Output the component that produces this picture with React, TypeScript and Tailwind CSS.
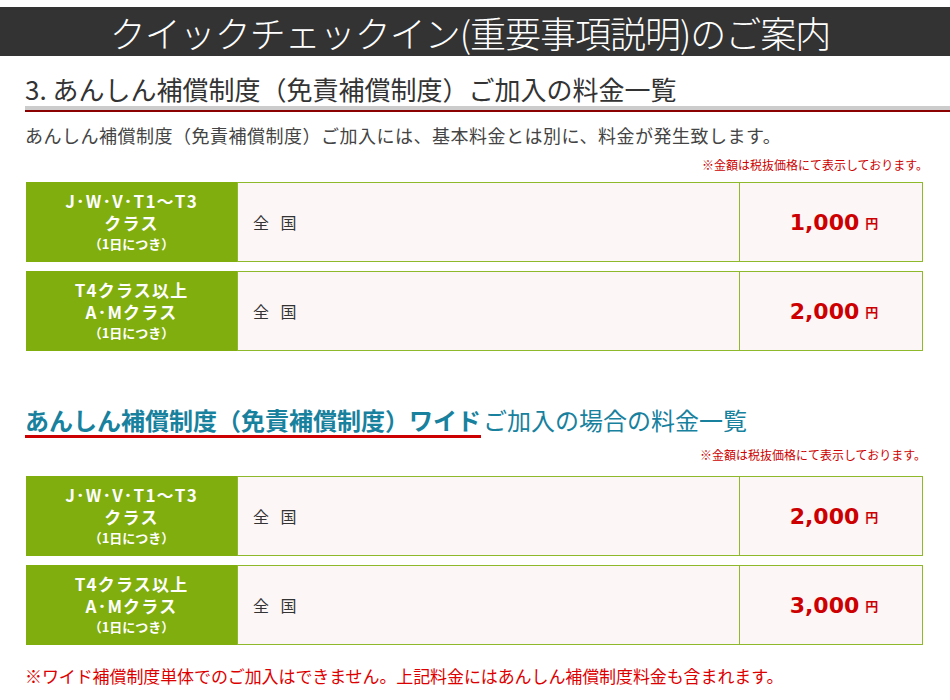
const jp = "font-['Noto_Sans_CJK_JP','Noto_Sans',sans-serif]";

interface Row {
  lines: string[];
  price: string;
}

const basic: Row[] = [
  { lines: ["J･W･V･T1～T3", "クラス"], price: "1,000" },
  { lines: ["T4クラス以上", "A･Mクラス"], price: "2,000" },
];

const wide: Row[] = [
  { lines: ["J･W･V･T1～T3", "クラス"], price: "2,000" },
  { lines: ["T4クラス以上", "A･Mクラス"], price: "3,000" },
];

function PriceRow({ row }: { row: Row }) {
  return (
    <div className="flex h-[80px] w-[897px] ml-[26px]">
      <div className="w-[211px] shrink-0 bg-[#7fae0e] flex flex-col items-center justify-center text-white font-bold">
        {row.lines.map((l) => (
          <div key={l} className="text-[17px] leading-[22px] tracking-[1.2px]">
            {l}
          </div>
        ))}
        <div className="text-[13px] leading-[20px]">（1日につき）</div>
      </div>
      <div className="flex-1 flex border border-[#8db92b] bg-[#fdf6f7]">
        <div className="flex-1 flex items-center pl-[15px] text-[16px] text-[#333] tracking-[4px]">
          全 国
        </div>
        <div className="w-[183px] shrink-0 border-l border-[#8db92b] flex items-center justify-center pl-[6px] text-[#cc0000] font-bold">
          <span className="text-[22px] font-['DejaVu_Sans',sans-serif]">{row.price}</span>
          <span className="text-[13px] ml-[6px] mt-[2px]">円</span>
        </div>
      </div>
    </div>
  );
}

export default function App() {
  return (
    <div className={`w-[950px] h-[700px] bg-white pt-[7px] overflow-hidden ${jp}`}>
      <div className="h-[49px] bg-[#333] flex items-center justify-center">
        <h1 className="text-white text-[36px] font-light tracking-[-1px] leading-none ml-[-10px]">
          クイックチェックイン(重要事項説明)のご案内
        </h1>
      </div>

      <h2 className="mt-[16px] pl-[25px] text-[26px] leading-[34px] text-[#333]">
        3. あんしん補償制度（免責補償制度）ご加入の料金一覧
      </h2>
      <div className="ml-[25px] h-[6px] bg-[#cccccc] border-b-2 border-[#8b0000]" />

      <p className="mt-[10px] pl-[25px] text-[18px] leading-[26px] text-[#444] tracking-[0.5px]">
        あんしん補償制度（免責補償制度）ご加入には、基本料金とは別に、料金が発生致します。
      </p>
      <p className="mt-[9px] pr-[22px] text-right text-[12px] leading-[16px] text-[#cc0000]">
        ※金額は税抜価格にて表示しております。
      </p>

      <div className="mt-[9px] flex flex-col gap-[9px]">
        {basic.map((r) => (
          <PriceRow key={r.price} row={r} />
        ))}
      </div>

      <div className="mt-[54px] ml-[25px] flex items-end text-[#17819e]">
        <span className="text-[24px] leading-[30px] font-bold border-b-[3px] border-[#cc0000]">
          あんしん補償制度（免責補償制度）ワイド
        </span>
        <span className="text-[24px] leading-[30px] pb-[3px] ml-[2px]">ご加入の場合の料金一覧</span>
      </div>
      <p className="mt-[9px] pr-[24px] text-right text-[12px] leading-[16px] text-[#cc0000]">
        ※金額は税抜価格にて表示しております。
      </p>

      <div className="mt-[13px] flex flex-col gap-[9px]">
        {wide.map((r) => (
          <PriceRow key={r.price} row={r} />
        ))}
      </div>

      <p className="mt-[19px] pl-[25px] text-[17px] leading-[24px] text-[#dd0000] tracking-[-0.1px]">
        ※ワイド補償制度単体でのご加入はできません。上記料金にはあんしん補償制度料金も含まれます。
      </p>
    </div>
  );
}
